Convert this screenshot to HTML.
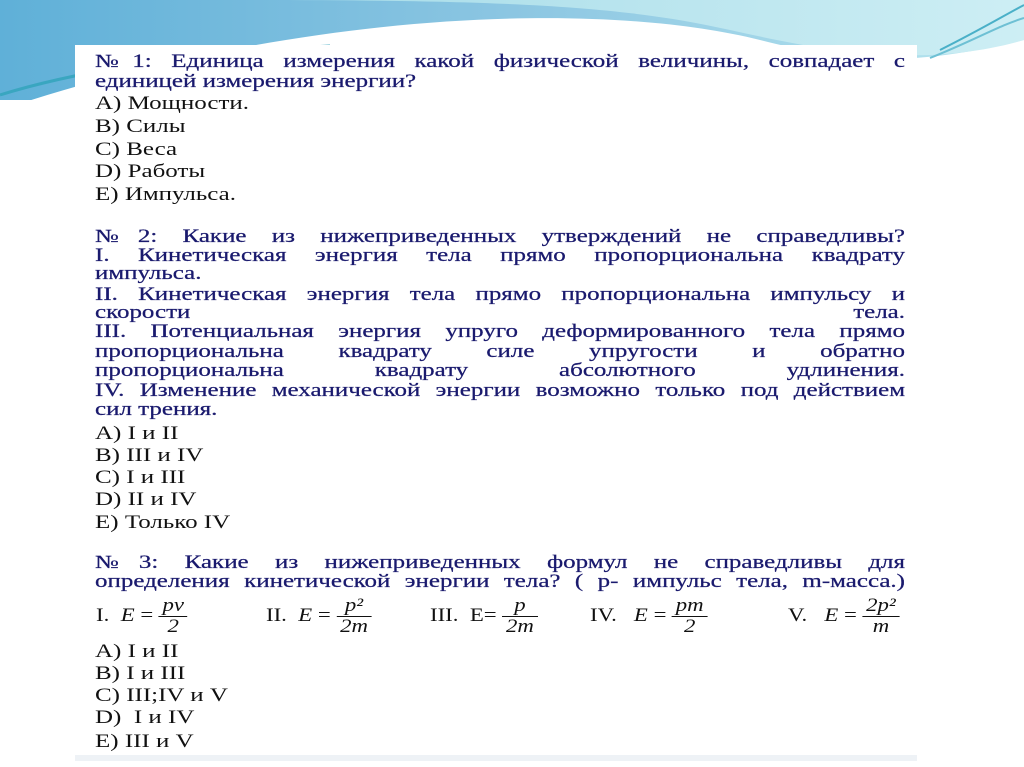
<!DOCTYPE html>
<html><head><meta charset="utf-8"><style>
body{margin:0;width:1024px;height:767px;background:#fff;position:relative;overflow:hidden;font-family:"Liberation Serif",serif}
.l{position:absolute;left:95px;width:600px;font-size:18.5px;line-height:20px;white-space:nowrap;transform:scaleX(1.35);transform-origin:0 0}
.q{color:#1a1a6e;text-align:justify;text-align-last:justify;-webkit-text-stroke:0.25px #1a1a6e}
.a{color:#111;font-size:18.5px}
.n{text-align-last:left}
.f{position:absolute;top:596px;font-size:19px;color:#111;font-family:"Liberation Serif",serif;transform:scaleX(1.2);transform-origin:0 0;white-space:nowrap}
.fr{display:inline-block;vertical-align:middle;text-align:center;font-style:italic;line-height:20px}
.fr span{display:block;padding:0 3px}
.fr span:first-child{border-bottom:1px solid #111}
</style></head><body>
<svg width="1024" height="767" style="position:absolute;left:0;top:0">
<defs>
<linearGradient id="g1" x1="0" y1="0" x2="1" y2="0"><stop offset="0" stop-color="#5fb0d8"/><stop offset="0.5" stop-color="#8cc6e2"/><stop offset="1" stop-color="#b8e6ef"/></linearGradient>
<linearGradient id="g2" x1="0" y1="0" x2="1" y2="0"><stop offset="0" stop-color="#a5dbe8"/><stop offset="1" stop-color="#cdeef4"/></linearGradient>
</defs>
<path d="M0 0 H1024 V40 C900 70 840 60 760 40 C600 0 300 10 0 110 Z" fill="url(#g1)"/>
<path d="M240 0 H1024 V40 C920 70 820 50 730 30 C620 5 500 0 240 0 Z" fill="url(#g2)"/>
<path d="M0 95 C80 70 200 52 330 46" stroke="#3aa6c0" stroke-width="3" fill="none"/>
<path d="M940 50 C980 30 1005 15 1024 5" stroke="#4ab0c8" stroke-width="2" fill="none"/>
<path d="M930 58 C975 40 1000 25 1024 18" stroke="#6ec0d4" stroke-width="2" fill="none"/>
<rect x="0" y="100" width="1024" height="667" fill="#fff"/>
<rect x="75" y="45" width="842" height="710" fill="#fff"/>
<rect x="75" y="755" width="842" height="6" fill="#eef2f6"/>
</svg>
<div class="l q" style="top:52px">№1: Единица измерения какой физической величины, совпадает с</div>
<div class="l q n" style="top:72px">единицей измерения энергии?</div>
<div class="l a" style="top:94px">А) Мощности.</div>
<div class="l a" style="top:117px">В) Силы</div>
<div class="l a" style="top:140px">С) Веса</div>
<div class="l a" style="top:162px">D) Работы</div>
<div class="l a" style="top:185px">Е) Импульса.</div>
<div class="l q" style="top:227px">№2: Какие из нижеприведенных утверждений не справедливы?</div>
<div class="l q" style="top:246px">I. Кинетическая энергия тела прямо пропорциональна квадрату</div>
<div class="l q n" style="top:264px">импульса.</div>
<div class="l q" style="top:285px">II. Кинетическая энергия тела прямо пропорциональна импульсу и</div>
<div class="l q" style="top:303px">скорости тела.</div>
<div class="l q" style="top:322px">III. Потенциальная энергия упруго деформированного тела прямо</div>
<div class="l q" style="top:342px">пропорциональна квадрату силе упругости и обратно</div>
<div class="l q" style="top:361px">пропорциональна квадрату абсолютного удлинения.</div>
<div class="l q" style="top:381px">IV. Изменение механической энергии возможно только под действием</div>
<div class="l q n" style="top:400px">сил трения.</div>
<div class="l a" style="top:424px">А) I и II</div>
<div class="l a" style="top:446px">В) III и IV</div>
<div class="l a" style="top:468px">С) I и III</div>
<div class="l a" style="top:490px">D) II и IV</div>
<div class="l a" style="top:513px">Е) Только IV</div>
<div class="l q" style="top:553px">№3: Какие из нижеприведенных формул не справедливы для</div>
<div class="l q" style="top:572px">определения кинетической энергии тела? (&nbsp;p- импульс тела, m-масса.)</div>
<div class="f" style="left:96px">I.&nbsp; <i>E</i> = <span class="fr"><span>pv</span><span>2</span></span></div>
<div class="f" style="left:266px">II.&nbsp; <i>E</i> = <span class="fr"><span>p²</span><span>2m</span></span></div>
<div class="f" style="left:430px">III.&nbsp; E= <span class="fr"><span>p</span><span>2m</span></span></div>
<div class="f" style="left:590px">IV.&nbsp;&nbsp; <i>E</i> = <span class="fr"><span>pm</span><span>2</span></span></div>
<div class="f" style="left:788px">V.&nbsp;&nbsp; <i>E</i> = <span class="fr"><span>2p²</span><span>m</span></span></div>
<div class="l a" style="top:642px">А) I и II</div>
<div class="l a" style="top:664px">В) I и III</div>
<div class="l a" style="top:686px">С) III;IV и V</div>
<div class="l a" style="top:708px">D)&nbsp; I и IV</div>
<div class="l a" style="top:732px">Е) III и V</div>
</body></html>
